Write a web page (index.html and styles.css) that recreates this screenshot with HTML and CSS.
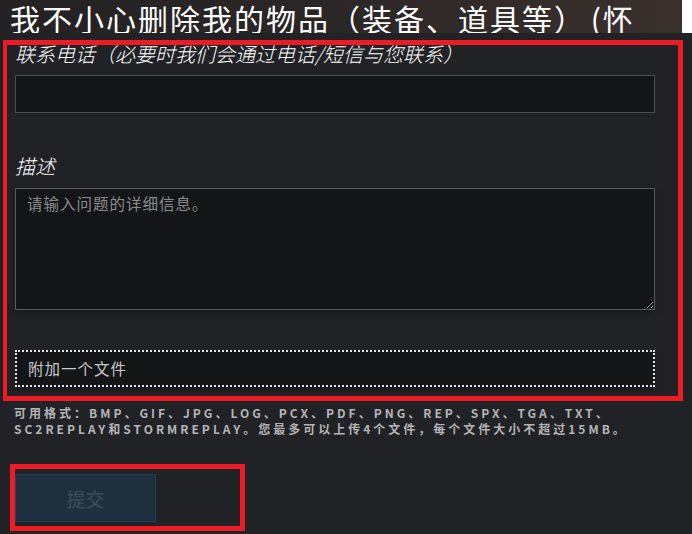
FILE: index.html
```html
<!DOCTYPE html>
<html lang="zh-CN">
<head>
<meta charset="utf-8">
<title>提交问题</title>
<link rel="stylesheet" href="styles.css">
</head>
<body>
<div class="page">
  <header class="header">
    <h1 class="title">我不小心删除我的物品（装备、道具等） (怀疑被盗)</h1>
  </header>
  <main class="panel">
    <div class="mark mark-form">
      <label class="label label-phone" for="phone">联系电话（必要时我们会通过电话/短信与您联系）</label>
      <input class="field" id="phone" type="text">
      <label class="label label-desc" for="desc">描述</label>
      <textarea class="area" id="desc" placeholder="请输入问题的详细信息。"></textarea>
      <div class="attach">附加一个文件</div>
    </div>
    <p class="formats">可用格式：BMP、GIF、JPG、LOG、PCX、PDF、PNG、REP、SPX、TGA、TXT、<br>SC2REPLAY和STORMREPLAY。您最多可以上传4个文件，每个文件大小不超过15MB。</p>
    <div class="mark mark-submit">
      <button class="submit" type="button" disabled>提交</button>
    </div>
  </main>
</div>
</body>
</html>
```

FILE: styles.css
```css
html, body {
  margin: 0;
  padding: 0;
}
body {
  background: #ffffff;
  width: 692px;
  height: 534px;
  overflow: hidden;
  font-family: "Noto Sans CJK SC", "Noto Sans", sans-serif;
}
.page {
  display: flex;
  flex-direction: column;
  height: 534px;
}
.header {
  width: 682px;
  height: 33px;
  flex: none;
  overflow: hidden;
  background: linear-gradient(90deg, #252223 0%, #2a2626 45%, #332c2a 75%, #3a312d 100%);
}
.title {
  margin: 0;
  width: 640px;
  padding-left: 10px;
  font-size: 30px;
  font-weight: 400;
  line-height: 36px;
  color: #ffffff;
  letter-spacing: 2px;
  word-spacing: -4px;
}
.panel {
  flex: 1;
  background: #212226;
  padding-top: 7px;
}
.mark {
  border: 5px solid #ed1c24;
}
.mark-form {
  margin-left: 3px;
  width: 663px;
  border-left-width: 4px;
  padding: 0 0 9px 8px;
  display: flex;
  flex-direction: column;
  align-items: flex-start;
}
.label {
  font-size: 20px;
  font-style: italic;
  font-weight: 300;
  line-height: 18px;
  color: #ffffff;
  display: block;
  white-space: nowrap;
}
.field {
  box-sizing: border-box;
  margin-top: 12px;
  width: 640px;
  height: 38px;
  background: #141517;
  border: 1px solid #4d4e52;
  outline: none;
  color: #cccccc;
}
.label-desc {
  margin-top: 44px;
}
.area {
  box-sizing: border-box;
  margin-top: 13px;
  width: 640px;
  height: 122px;
  background: #141517;
  border: 1px solid #5a5b5e;
  padding: 3px 11px;
  font-family: "Noto Sans CJK SC", "Noto Sans", sans-serif;
  font-size: 15.5px;
  letter-spacing: 1px;
  color: #cccccc;
  outline: none;
  resize: vertical;
  box-shadow: 0 4px 6px rgba(0, 0, 0, 0.25);
}
.area::placeholder {
  color: #8a8b8d;
}
.attach {
  box-sizing: border-box;
  margin-top: 40px;
  width: 640px;
  height: 37px;
  background: #141517;
  border: 2px dotted #e6e6e6;
  padding-left: 11px;
  font-size: 15.5px;
  letter-spacing: 1px;
  line-height: 33px;
  color: #c9c9c9;
  box-shadow: 0 4px 6px rgba(0, 0, 0, 0.25);
}
.formats {
  margin: 4px 0 0 14px;
  font-size: 12px;
  line-height: 16px;
  letter-spacing: 3px;
  font-weight: 700;
  color: #b4b4b6;
  white-space: nowrap;
}
.mark-submit {
  margin: 27px 0 0 10px;
  width: 235px;
  height: 67px;
  padding: 5px 0 0 0;
  box-sizing: border-box;
}
.submit {
  display: block;
  width: 141px;
  height: 48px;
  margin: 0;
  background: #1e2f3d;
  border: 1px solid #21405a;
  color: #3a4955;
  font-family: "Noto Sans CJK SC", "Noto Sans", sans-serif;
  font-size: 19px;
  font-weight: 500;
  padding: 0;
}
```
